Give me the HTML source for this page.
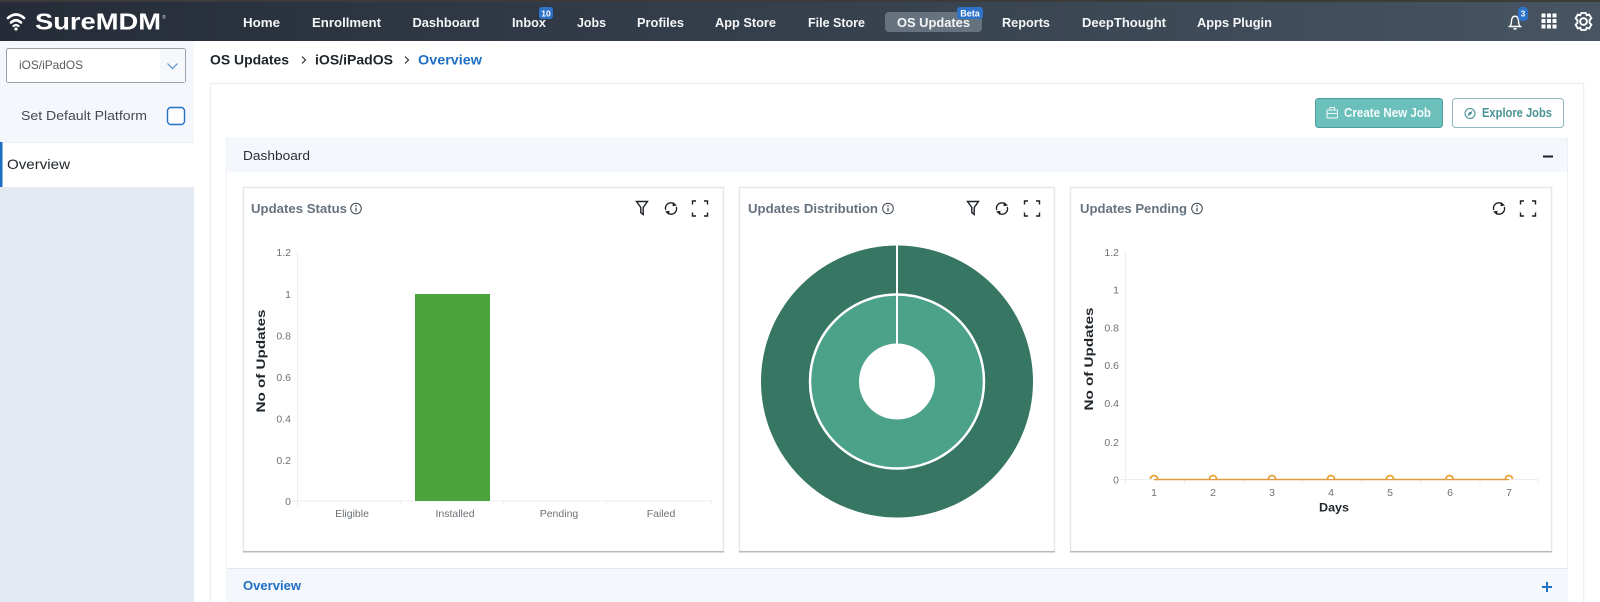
<!DOCTYPE html>
<html><head><meta charset="utf-8"><title>SureMDM</title>
<style>
html,body{margin:0;padding:0;background:#fff;width:1600px;height:602px;overflow:hidden}
svg{display:block;filter:blur(.35px)}
text{font-family:"Liberation Sans",sans-serif}
.n{fill:#f4f6f8;font-size:13px;font-weight:700}
.g{fill:#6c7176;font-size:10.5px}
.t{fill:#66727f;font-size:13px;font-weight:700}
.k{fill:#1f2429}
.ic{fill:none;stroke:#1d2227;stroke-width:1.4}
</style></head><body>
<svg width="1600" height="602" viewBox="0 0 1600 602" xmlns="http://www.w3.org/2000/svg">
<defs>
<linearGradient id="nav" x1="0" x2="1" y1="0" y2="0"><stop offset="0" stop-color="#252c37"/><stop offset="1" stop-color="#475462"/></linearGradient>
<g id="filter"><path class="ic" stroke-width="1.6" d="M-5.500-6.500H5.500L1.200-.5V6.500L-1.200 4.500V-.5Z"/></g>
<g id="refresh"><path class="ic" d="M-5.300 1.500A5.400 5.400 0 0 1 3.500-4.200M5.300-1.500A5.400 5.400 0 0 1-3.500 4.200"/><path d="M2-6.500 6-3 1.500-2.200ZM-2 6.500-6 3-1.500 2.200Z" fill="#1d2227"/></g>
<g id="expand"><path class="ic" d="M-7.500-4V-7.500H-4M4-7.500H7.500V-4M7.500 4V7.500H4M-4 7.500H-7.500V4"/></g>
<g id="info"><circle r="5.300" fill="none" stroke="#3d4752" stroke-width="1"/><path d="M0-.8V3" stroke="#3d4752" stroke-width="1.200"/><circle cy="-2.700" r=".8" fill="#3d4752"/></g>
</defs>

<rect width="1600" height="602" fill="#fff"/>
<!-- Nav -->
<rect width="1600" height="41" fill="url(#nav)"/>
<rect width="1600" height="2" fill="#3c3b3a"/>
<g fill="none" stroke="#fff" stroke-linecap="round">
<path d="M8 18Q16 11 24 18" stroke-width="2.600"/><path d="M11 22.500Q16 18 21 22.500" stroke-width="2.600"/><path d="M13.500 26Q16 24 18.500 26" stroke-width="2.200"/></g>
<circle cx="16" cy="29" r="1.600" fill="#fff"/>
<text x="35" y="29.500" fill="#fff" font-size="23.500" font-weight="700" textLength="126" lengthAdjust="spacingAndGlyphs">SureMDM</text>
<text x="162" y="19" fill="#ddd" font-size="5">®</text>
<rect x="885" y="12" width="97" height="20" rx="4" fill="#66737f"/>
<text class="n" x="243" y="27" textLength="37" lengthAdjust="spacingAndGlyphs">Home</text>
<text class="n" x="312" y="27" textLength="69" lengthAdjust="spacingAndGlyphs">Enrollment</text>
<text class="n" x="412.500" y="27" textLength="67" lengthAdjust="spacingAndGlyphs">Dashboard</text>
<text class="n" x="512" y="27" textLength="34" lengthAdjust="spacingAndGlyphs">Inbox</text>
<text class="n" x="577" y="27" textLength="29" lengthAdjust="spacingAndGlyphs">Jobs</text>
<text class="n" x="637" y="27" textLength="47" lengthAdjust="spacingAndGlyphs">Profiles</text>
<text class="n" x="715" y="27" textLength="61" lengthAdjust="spacingAndGlyphs">App Store</text>
<text class="n" x="808" y="27" textLength="57" lengthAdjust="spacingAndGlyphs">File Store</text>
<text class="n" x="897" y="27" textLength="73" lengthAdjust="spacingAndGlyphs">OS Updates</text>
<text class="n" x="1002" y="27" textLength="48" lengthAdjust="spacingAndGlyphs">Reports</text>
<text class="n" x="1082" y="27" textLength="84" lengthAdjust="spacingAndGlyphs">DeepThought</text>
<text class="n" x="1197" y="27" textLength="75" lengthAdjust="spacingAndGlyphs">Apps Plugin</text>
<rect x="539" y="7" width="14" height="12" rx="3" fill="#2f73c9"/>
<text x="546" y="16.500" text-anchor="middle" fill="#fff" font-size="8.500" font-weight="700">10</text>
<rect x="957" y="7" width="26" height="12" rx="3" fill="#2f73c9"/>
<text x="970" y="16.500" text-anchor="middle" fill="#fff" font-size="9" font-weight="700">Beta</text>
<!-- right icons -->
<path d="M1508.500 26.500H1521.500M1510 26.500C1512 24 1511 21 1512 18.500C1513 15.500 1517 15.500 1518 18.500C1519 21 1518 24 1520 26.500" fill="none" stroke="#fff" stroke-width="1.400"/>
<path d="M1513.500 28.800H1516.500" stroke="#fff" stroke-width="1.600"/>
<rect x="1518" y="7" width="10" height="14" rx="4" fill="#2f73c9"/>
<text x="1523" y="16.500" text-anchor="middle" fill="#fff" font-size="8" font-weight="700">3</text>
<g fill="#fff">
<rect x="1541.500" y="13.500" width="4" height="4"/><rect x="1547" y="13.500" width="4" height="4"/><rect x="1552.500" y="13.500" width="4" height="4"/>
<rect x="1541.500" y="19" width="4" height="4"/><rect x="1547" y="19" width="4" height="4"/><rect x="1552.500" y="19" width="4" height="4"/>
<rect x="1541.500" y="24.500" width="4" height="4"/><rect x="1547" y="24.500" width="4" height="4"/><rect x="1552.500" y="24.500" width="4" height="4"/></g>
<g transform="translate(1583.500 21.500) scale(1.130)" fill="none" stroke="#fff">
<circle r="3" stroke-width="1.700"/>
<path stroke-width="1.600" d="M-2-7.500H2L2.800-5.500 5-6.200 7-2.800 5.400-1.300V1.300L7 2.800 5 6.200 2.800 5.500 2 7.500H-2L-2.800 5.500-5 6.200-7 2.800-5.400 1.300V-1.300L-7-2.800-5-6.200-2.800-5.500Z"/></g>

<!-- Sidebar -->
<rect x="0" y="41" width="194" height="561" fill="#e3eaf1"/>
<rect x="0" y="41" width="194" height="101" fill="#f4f7fc"/>
<rect x="6.500" y="48.500" width="179" height="34" rx="2" fill="#fff" stroke="#9aa2a9"/>
<rect x="160" y="49" width="25" height="33" fill="#f6f8fc"/>
<path d="M167.500 63.500L172.500 68.500 177.500 63.500" fill="none" stroke="#5a8fca" stroke-width="1.200"/>
<text x="19" y="69" fill="#555b60" font-size="12" textLength="64" lengthAdjust="spacingAndGlyphs">iOS/iPadOS</text>
<text x="21" y="120" fill="#454a4f" font-size="13" textLength="126" lengthAdjust="spacingAndGlyphs">Set Default Platform</text>
<rect x="167.500" y="107.500" width="17" height="17" rx="3.500" fill="#fff" stroke="#2470c4" stroke-width="1.400"/>
<rect x="0" y="142" width="194" height="45" fill="#fff"/>
<rect x="0" y="142" width="194" height="1" fill="#e8edf3"/>
<rect x="0" y="142" width="2.500" height="45" fill="#1f6fc5"/>
<text x="7" y="169" fill="#1f2429" font-size="14" textLength="63" lengthAdjust="spacingAndGlyphs">Overview</text>

<!-- Breadcrumb -->
<text class="k" x="210" y="64.500" font-size="14" font-weight="700" textLength="79" lengthAdjust="spacingAndGlyphs">OS Updates</text>
<path d="M302 56.500L305.500 60 302 63.500M405 56.500L408.500 60 405 63.500" fill="none" stroke="#2b3036" stroke-width="1.200"/>
<text class="k" x="315" y="64.500" font-size="14" font-weight="700" textLength="78" lengthAdjust="spacingAndGlyphs">iOS/iPadOS</text>
<text x="418" y="64.500" fill="#1f6fc5" font-size="14" font-weight="700" textLength="64" lengthAdjust="spacingAndGlyphs">Overview</text>

<!-- Panel -->
<rect x="210.500" y="83.500" width="1373" height="530" fill="#fff" stroke="#edf1f6" stroke-width="1.500"/>
<!-- Buttons -->
<rect x="1315.500" y="98.500" width="127" height="29" rx="3" fill="#6cc0bc" stroke="#4f9da0"/>
<g fill="none" stroke="#f2fbfa" stroke-width="1"><rect x="1327" y="110" width="10.500" height="8" rx="1"/><path d="M1330 110V107.500H1334.500V110M1327 113.500H1337.500"/></g>
<text x="1344" y="117" fill="#f4fbfa" font-size="12.500" font-weight="700" textLength="87" lengthAdjust="spacingAndGlyphs">Create New Job</text>
<rect x="1452.500" y="98.500" width="111" height="29" rx="3" fill="#fff" stroke="#8fb8bc"/>
<circle cx="1470" cy="113.500" r="5" fill="none" stroke="#3f8c8f" stroke-width="1"/><path d="M1472.500 111L1471 114.500 1467.500 116 1469 112.500Z" fill="#3f8c8f"/>
<text x="1482" y="117" fill="#4a9296" font-size="12.500" font-weight="700" textLength="70" lengthAdjust="spacingAndGlyphs">Explore Jobs</text>

<!-- Dashboard section -->
<rect x="226" y="138" width="1342" height="34" fill="#f4f7fc"/>
<rect x="226" y="138" width="1342" height="1" fill="#edf1f6"/>
<rect x="226" y="139" width="1" height="429" fill="#edf1f6"/><rect x="1567" y="139" width="1" height="429" fill="#edf1f6"/>
<text x="243" y="160" fill="#2a3036" font-size="13" textLength="67" lengthAdjust="spacingAndGlyphs">Dashboard</text>
<rect x="1543" y="155.500" width="10" height="2" fill="#1d2227"/>

<!-- Cards -->
<g fill="#fff" stroke="#e3e8ed" stroke-width="1.500">
<rect x="243.500" y="187.500" width="480" height="364"/>
<rect x="739.500" y="187.500" width="315" height="364"/>
<rect x="1070.500" y="187.500" width="481" height="364"/></g>
<g fill="#b7bbbf"><rect x="243" y="551" width="481" height="1.500"/><rect x="739" y="551" width="316" height="1.500"/><rect x="1070" y="551" width="482" height="1.500"/></g>

<text class="t" x="251" y="213" textLength="96" lengthAdjust="spacingAndGlyphs">Updates Status</text>
<use href="#info" x="356" y="208.500"/>
<text class="t" x="748" y="213" textLength="130" lengthAdjust="spacingAndGlyphs">Updates Distribution</text>
<use href="#info" x="888" y="208.500"/>
<text class="t" x="1080" y="213" textLength="107" lengthAdjust="spacingAndGlyphs">Updates Pending</text>
<use href="#info" x="1197" y="208.500"/>
<use href="#filter" x="642" y="208"/><use href="#refresh" x="671" y="208.500"/><use href="#expand" x="700" y="208.500"/>
<use href="#filter" x="973" y="208"/><use href="#refresh" x="1002" y="208.500"/><use href="#expand" x="1032" y="208.500"/>
<use href="#refresh" x="1499" y="208.500"/><use href="#expand" x="1528" y="208.500"/>

<!-- Chart 1 -->
<path d="M297.500 252V501M292 501H712M297.500 506V501M400.500 505V501M503.500 505V501M606.500 505V501M711.500 505V501" stroke="#eceef2" fill="none"/>
<g class="g" text-anchor="end">
<text x="291" y="256">1.2</text><text x="291" y="298">1</text><text x="291" y="339.500">0.8</text><text x="291" y="381">0.6</text><text x="291" y="422.500">0.4</text><text x="291" y="464">0.2</text><text x="291" y="505">0</text></g>
<rect x="415" y="294" width="75" height="207" fill="#4ca33b"/>
<g class="g" text-anchor="middle">
<text x="352" y="517">Eligible</text><text x="455" y="517">Installed</text><text x="559" y="517">Pending</text><text x="661" y="517">Failed</text></g>
<text transform="translate(265 361) rotate(-90)" text-anchor="middle" fill="#1f2429" font-size="11.500" font-weight="700" textLength="103" lengthAdjust="spacingAndGlyphs">No of Updates</text>

<!-- Chart 2 donut -->
<circle cx="897" cy="381.500" r="136" fill="#367663"/>
<circle cx="897" cy="381.500" r="87" fill="#4ca289" stroke="#fff" stroke-width="2.500"/>
<circle cx="897" cy="381.500" r="38" fill="#fff"/>
<path d="M897 245.500V344" stroke="#fff" stroke-width="2"/>

<!-- Chart 3 -->
<path d="M1125.500 252V479.500M1120 479.500H1538M1125.500 484V479.500M1184.500 484V479.500M1243.500 484V479.500M1302.500 484V479.500M1361.500 484V479.500M1421 484V479.500M1480 484V479.500M1538 484V479.500" stroke="#eceef2" fill="none"/>
<g class="g" text-anchor="end">
<text x="1119" y="256">1.2</text><text x="1119" y="293.500">1</text><text x="1119" y="331.500">0.8</text><text x="1119" y="369">0.6</text><text x="1119" y="407">0.4</text><text x="1119" y="446">0.2</text><text x="1119" y="483.500">0</text></g>
<path d="M1154 479.500H1509" stroke="#dd9a45" stroke-width="1.500"/>
<g fill="#fff" stroke="#eda133" stroke-width="1.800">
<path d="M1150.500 479a3.500 3.500 0 0 1 7 0"/><path d="M1209.500 479a3.500 3.500 0 0 1 7 0"/><path d="M1268.500 479a3.500 3.500 0 0 1 7 0"/><path d="M1327.500 479a3.500 3.500 0 0 1 7 0"/><path d="M1386.500 479a3.500 3.500 0 0 1 7 0"/><path d="M1446 479a3.500 3.500 0 0 1 7 0"/><path d="M1505.500 479a3.500 3.500 0 0 1 7 0"/></g>
<g class="g" text-anchor="middle">
<text x="1154" y="496">1</text><text x="1213" y="496">2</text><text x="1272" y="496">3</text><text x="1331" y="496">4</text><text x="1390" y="496">5</text><text x="1450" y="496">6</text><text x="1509" y="496">7</text></g>
<text x="1334" y="511.500" text-anchor="middle" fill="#1f2429" font-size="12" font-weight="700" textLength="30" lengthAdjust="spacingAndGlyphs">Days</text>
<text transform="translate(1093 359) rotate(-90)" text-anchor="middle" fill="#1f2429" font-size="11.500" font-weight="700" textLength="103" lengthAdjust="spacingAndGlyphs">No of Updates</text>

<!-- Overview bar -->
<rect x="226" y="568" width="1342" height="34" fill="#f4f7fc"/>
<rect x="226" y="568" width="1342" height="1" fill="#e3e9f0"/>
<text x="243" y="590" fill="#1f6fc5" font-size="13" font-weight="700" textLength="58" lengthAdjust="spacingAndGlyphs">Overview</text>
<path d="M1547 582V592M1542 587H1552" stroke="#1f6fc5" stroke-width="2"/>
</svg>
</body></html>
